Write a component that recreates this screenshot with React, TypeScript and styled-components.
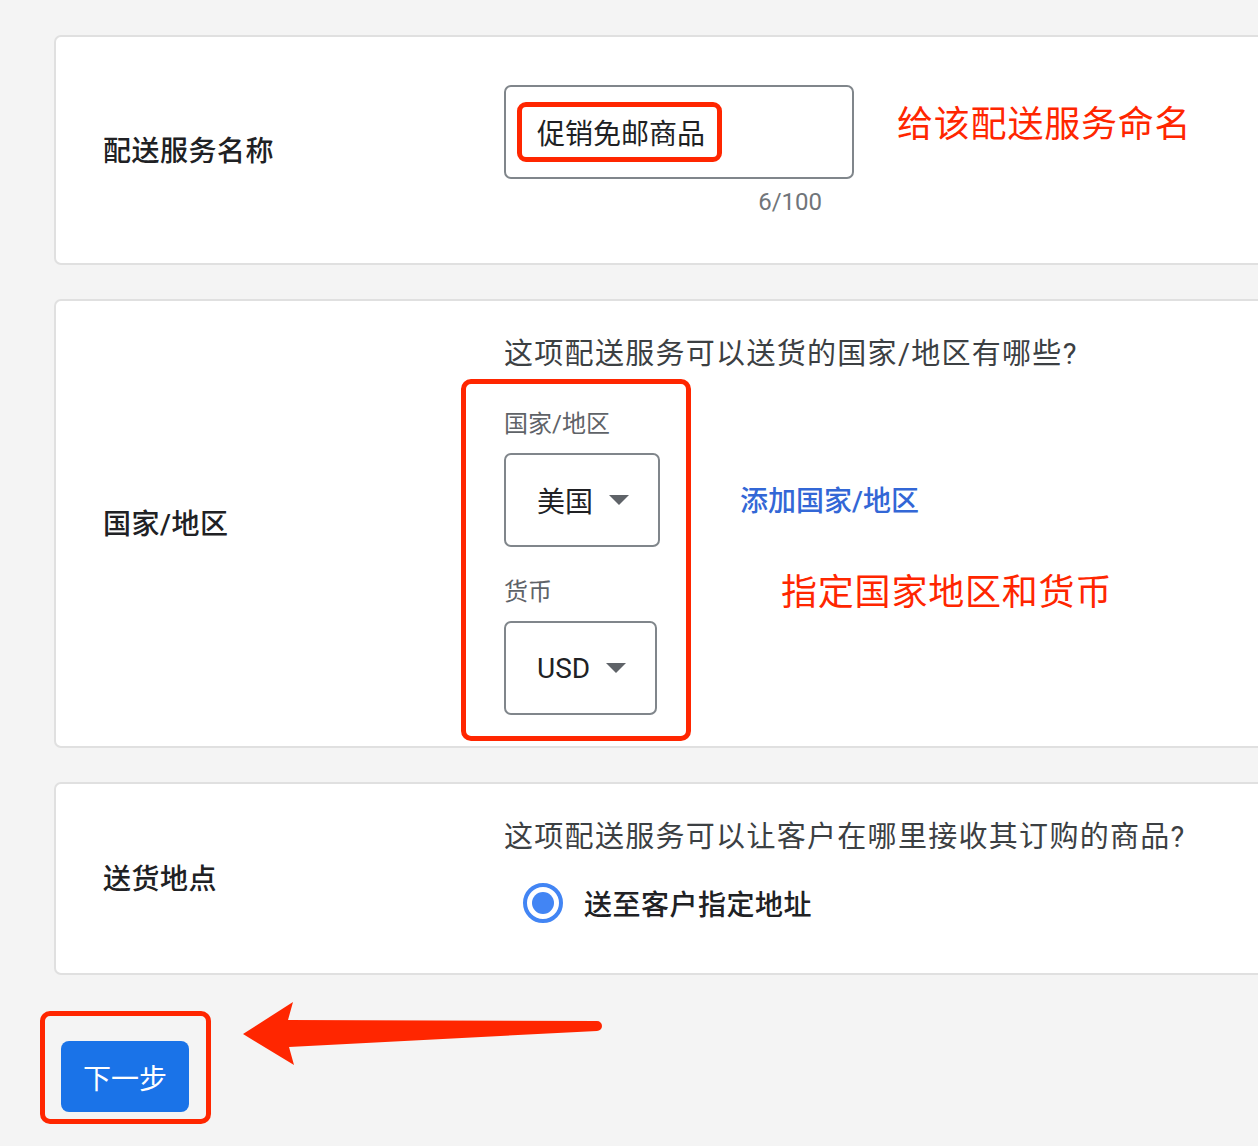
import styled, { createGlobalStyle } from 'styled-components';

const GlobalStyle = createGlobalStyle`
  html, body {
    margin: 0;
    padding: 0;
    background: #f4f4f4;
    overflow: hidden;
  }
  body {
    font-family: "Roboto", "Noto Sans CJK SC", sans-serif;
    color: #202124;
  }
`;

const Page = styled.div`
  width: 1258px;
  height: 1146px;
  box-sizing: border-box;
  padding: 35px 0 0 54px;
  overflow: hidden;
`;

const Card = styled.section<{ $height: number }>`
  display: grid;
  grid-template-columns: 403px 1fr;
  width: 1240px;
  height: ${(p) => p.$height}px;
  box-sizing: border-box;
  padding-left: 47px;
  margin-bottom: 34px;
  background: #fff;
  border: 2px solid #e0e0e0;
  border-radius: 7px;
`;

const Label = styled.div`
  align-self: center;
  margin-top: -3px;
  font-size: 28px;
  font-weight: 500;
  letter-spacing: 0.5px;
  color: #202124;
`;

const Body = styled.div<{ $top: number }>`
  padding-top: ${(p) => p.$top}px;
  margin-left: -2px;
`;

const Question = styled.div`
  font-size: 29px;
  line-height: 40px;
  letter-spacing: 1.3px;
  color: #3c4043;
`;

const Row = styled.div`
  display: flex;
  align-items: flex-start;
`;

const NameField = styled.div`
  display: flex;
  flex-direction: column;
  align-items: flex-end;
`;

const TextBox = styled.div`
  position: relative;
  width: 350px;
  height: 94px;
  box-sizing: border-box;
  padding-left: 31px;
  display: flex;
  align-items: center;
  border: 2px solid #80868b;
  border-radius: 7px;
  font-size: 28px;
  color: #202124;
`;

const Counter = styled.div`
  margin: 9px 32px 0 0;
  font-size: 24px;
  line-height: 28px;
  color: #70757a;
`;

/* red hand-drawn style frames and notes */
const Frame = styled.div<{ $left: number; $top: number; $w: number; $h: number; $r?: number }>`
  position: absolute;
  left: ${(p) => p.$left}px;
  top: ${(p) => p.$top}px;
  width: ${(p) => p.$w}px;
  height: ${(p) => p.$h}px;
  box-sizing: border-box;
  border: 5px solid #ff2600;
  border-radius: ${(p) => p.$r ?? 9}px;
  pointer-events: none;
`;

const Note = styled.div<{ $top: number; $left: number }>`
  margin-top: ${(p) => p.$top}px;
  margin-left: ${(p) => p.$left}px;
  font-size: 36px;
  line-height: 50px;
  letter-spacing: 0.8px;
  color: #ff2600;
  white-space: nowrap;
`;

const Fields = styled.div`
  position: relative;
  display: flex;
  flex-direction: column;
  align-items: flex-start;
  margin-top: 35px;
`;

const FieldLabel = styled.div<{ $gap?: number }>`
  margin-top: ${(p) => p.$gap ?? 0}px;
  margin-bottom: 14px;
  font-size: 24px;
  line-height: 30px;
  color: #5f6368;
`;

const Select = styled.div`
  display: inline-flex;
  align-items: center;
  height: 94px;
  box-sizing: border-box;
  padding: 0 29px 0 31px;
  gap: 16px;
  border: 2px solid #80868b;
  border-radius: 7px;
  font-size: 28px;
  color: #202124;
`;

const Caret = styled.span`
  width: 0;
  height: 0;
  border-left: 10px solid transparent;
  border-right: 10px solid transparent;
  border-top: 10px solid #5f6368;
`;

const Side = styled.div`
  display: flex;
  flex-direction: column;
  align-items: flex-start;
  padding-top: 108px;
  margin-left: 80px;
`;

const Link = styled.a`
  font-size: 28px;
  line-height: 40px;
  font-weight: 500;
  color: #3367d6;
  text-decoration: none;
  cursor: pointer;
`;

const RadioRow = styled.label`
  display: flex;
  align-items: center;
  gap: 21px;
  margin: 26px 0 0 19px;
  font-size: 28px;
  font-weight: 500;
  letter-spacing: 0.5px;
  color: #202124;
`;

const RadioDot = styled.span`
  width: 40px;
  height: 40px;
  box-sizing: border-box;
  border: 4px solid #4285f4;
  border-radius: 50%;
  display: flex;
  align-items: center;
  justify-content: center;

  &::after {
    content: '';
    width: 22px;
    height: 22px;
    border-radius: 50%;
    background: #4285f4;
  }
`;

const Footer = styled.div`
  position: relative;
  margin: 66px 0 0 7px;
`;

const NextButton = styled.button`
  width: 128px;
  height: 71px;
  border: none;
  border-radius: 8px;
  background: #1a73e8;
  color: #fff;
  font-family: inherit;
  font-size: 28px;
  cursor: pointer;
`;

const Arrow = styled.svg`
  position: absolute;
  left: 179px;
  top: -42px;
`;

export default function App() {
  return (
    <Page>
      <GlobalStyle />

      <Card $height={230}>
        <Label>配送服务名称</Label>
        <Body $top={48}>
          <Row>
            <NameField>
              <TextBox>
                促销免邮商品
                <Frame $left={11} $top={15} $w={205} $h={60} />
              </TextBox>
              <Counter>6/100</Counter>
            </NameField>
            <Note $top={15} $left={43}>给该配送服务命名</Note>
          </Row>
        </Body>
      </Card>

      <Card $height={449}>
        <Label>国家/地区</Label>
        <Body $top={33}>
          <Question>这项配送服务可以送货的国家/地区有哪些?</Question>
          <Row>
            <Fields>
              <FieldLabel>国家/地区</FieldLabel>
              <Select>
                美国
                <Caret />
              </Select>
              <FieldLabel $gap={30}>货币</FieldLabel>
              <Select>
                USD
                <Caret />
              </Select>
              <Frame $left={-43} $top={-30} $w={230} $h={362} $r={10} />
            </Fields>
            <Side>
              <Link>添加国家/地区</Link>
              <Note $top={46} $left={41}>指定国家地区和货币</Note>
            </Side>
          </Row>
        </Body>
      </Card>

      <Card $height={193}>
        <Label>送货地点</Label>
        <Body $top={33}>
          <Question>这项配送服务可以让客户在哪里接收其订购的商品?</Question>
          <RadioRow>
            <RadioDot />
            送至客户指定地址
          </RadioRow>
        </Body>
      </Card>

      <Footer>
        <NextButton>下一步</NextButton>
        <Frame $left={-21} $top={-30} $w={171} $h={113} $r={10} />
        <Arrow width="370" height="72" viewBox="0 0 370 72">
          <path
            d="M3 35 L53 3 L48 21 L357 22 A5 5 0 0 1 357 32 L49 48 L54 66 Z"
            fill="#ff2600"
          />
        </Arrow>
      </Footer>
    </Page>
  );
}
